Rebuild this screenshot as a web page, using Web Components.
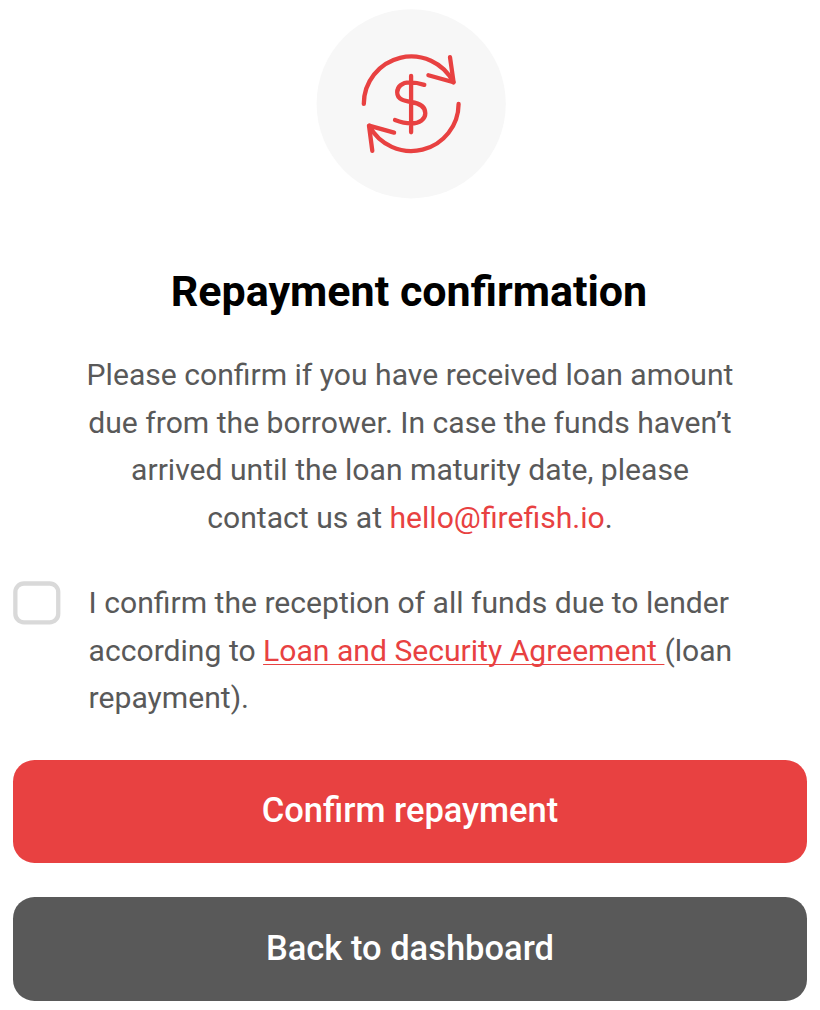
<!DOCTYPE html>
<html lang="en">
<head>
<meta charset="utf-8">
<title>Repayment confirmation</title>
<style>
body { margin: 0; background: #fff; font-family: Roboto, sans-serif; }
</style>
</head>
<body>
<repayment-dialog></repayment-dialog>
<script>
class BaseElement extends HTMLElement {
  constructor() {
    super();
    this.attachShadow({ mode: 'open' }).innerHTML = this.constructor.markup;
  }
}

class RepaymentIcon extends BaseElement {
  static markup = `
    <style>
      :host { display: block; width: 190px; height: 190px; }
      svg { display: block; }
    </style>
    <svg width="190" height="190" viewBox="316 9 190 190" fill="none" stroke="#e84141" stroke-width="4.3" stroke-linecap="round" stroke-linejoin="round">
      <circle cx="411.2" cy="103.8" r="94.6" fill="#f7f7f7" stroke="none"/>
      <path d="M363.8 103.9A47.4 47.4 0 0 1 453.4 82.3M458.6 103.9A47.4 47.4 0 0 1 369.3 125.8"/>
      <path d="M428.4 75.2L453.6 82.2L450 57.2M394.1 132.6L369 125.6L372.3 150.8"/>
      <path d="M411.1 75.8V132.3M424.3 84.9C420 83.4 415 82.3 409.5 82.3C402 82.3 397.2 86.8 397.2 92.3C397.2 99.4 404 101 411 102C419 103.2 425.3 106.5 425.3 113.2C425.3 119 420 123.4 411 123.4C405 123.4 400 121.9 395 120"/>
    </svg>`;
}

class CheckBox extends BaseElement {
  static markup = `
    <style>
      :host { display: block; width: 47.4px; height: 43.2px; }
      svg { display: block; overflow: visible; }
    </style>
    <svg width="47.4" height="43.2"><rect x="2.35" y="2.5" width="42.9" height="38.8" rx="8.6" fill="#fff" stroke="#d9d9d9" stroke-width="4.3"/></svg>`;
}

class ConsentRow extends BaseElement {
  static markup = `
    <style>
      :host { display: flex; align-items: flex-start; gap: 28px; }
      check-box { flex: none; margin-top: 1.7px; }
      p { margin: 0; white-space: nowrap; }
    </style>
    <check-box></check-box><p><slot></slot></p>`;
}

class ActionButton extends BaseElement {
  static markup = `
    <style>
      :host { display: block; }
      button { display: flex; width: 100%; height: 103.2px; align-items: center; justify-content: center;
        border: 0; border-radius: 21.5px; padding: 0 0 2px; background: var(--fill); color: #fff;
        font: 500 34.5px Roboto, sans-serif; }
    </style>
    <button type="button"><slot></slot></button>`;
}

class RepaymentDialog extends BaseElement {
  static markup = `
    <style>
      :host { display: flex; flex-direction: column; box-sizing: border-box; height: 1010px; overflow: hidden;
        padding: 9px 13.2px 0; color: #595959; font-size: 30.12px; line-height: 47.4px; }
      repayment-icon { margin-left: 302.8px; }
      h1 { margin: 64px 0 0; padding-right: 2px; text-align: center; color: #000; font-size: 43px; font-weight: 700; line-height: 56px; white-space: nowrap; }
      .intro { margin: 32.3px 0 0; text-align: center; white-space: nowrap; }
      a { color: #e84141; text-decoration: none; }
      .agreement { text-decoration: underline #e84141 1px; text-underline-offset: 3px; text-decoration-skip-ink: none; white-space: pre; }
      consent-row { margin-top: 38.2px; }
      .actions { display: grid; gap: 34.3px; margin-top: 38.5px; --fill: #e84141; }
      .secondary { --fill: #595959; }
    </style>
    <repayment-icon></repayment-icon>
    <h1>Repayment confirmation</h1>
    <p class="intro">Please confirm if you have received loan amount<br>due from the borrower. In case the funds haven’t<br>arrived until the loan maturity date, please<br>contact us at <a>hello@firefish.io</a>.</p>
    <consent-row>I confirm the reception of all funds due to lender<br>according to <a class="agreement">Loan and Security Agreement </a>(loan<br>repayment).</consent-row>
    <div class="actions">
      <action-button>Confirm repayment</action-button>
      <action-button class="secondary">Back to dashboard</action-button>
    </div>`;
}

customElements.define('repayment-icon', RepaymentIcon);
customElements.define('check-box', CheckBox);
customElements.define('consent-row', ConsentRow);
customElements.define('action-button', ActionButton);
customElements.define('repayment-dialog', RepaymentDialog);
</script>
</body>
</html>
